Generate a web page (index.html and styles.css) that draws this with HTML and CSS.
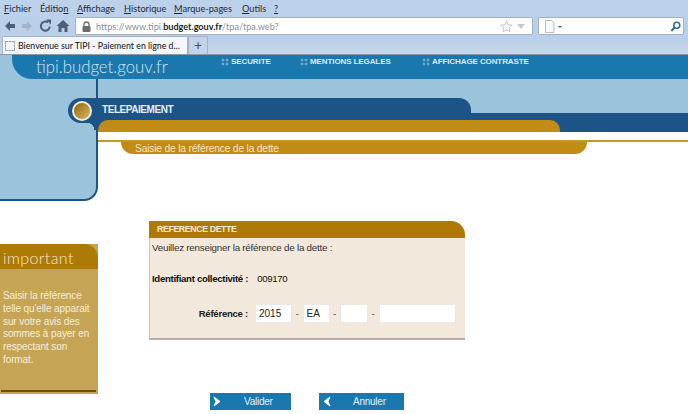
FILE: index.html
```html
<!DOCTYPE html>
<html>
  <head>
    <title>Bienvenue sur TIPI</title>
    <link rel="stylesheet" href="styles.css">
  </head>
  <body>
    <div class="chrome">
      <div class="menubar">
        <span class="menu m1"><u>F</u>ichier</span>
        <span class="menu m2">Éditio<u>n</u></span>
        <span class="menu m3"><u>A</u>ffichage</span>
        <span class="menu m4"><u>H</u>istorique</span>
        <span class="menu m5"><u>M</u>arque-pages</span>
        <span class="menu m6"><u>O</u>utils</span>
        <span class="menu"><u>?</u></span>
      </div>
      <div class="toolbar">
        <svg class="tool" width="72" height="16" viewBox="0 0 72 16">
          <path d="M2 8l5-5v3h5v4h-5v3z" fill="#4d5f73"/>
          <path d="M29 8l-5-5v3h-5v4h5v3z" fill="#a3b2c4"/>
          <path d="M45 4.500a4.500 4.500 0 1 0 1.800 4" fill="none" stroke="#4d5f73" stroke-width="2"/>
          <path d="M43 1.500l5 0v5z" fill="#4d5f73"/>
          <path d="M60 2l6.500 6h-2v6h-3v-4h-3v4h-3v-6h-2z" fill="#4d5f73"/>
        </svg>
        <div class="urlbar">
          <svg class="lock" width="9" height="11" viewBox="0 0 9 11">
            <path d="M2 5V3.500a2.500 2.500 0 0 1 5 0V5" fill="none" stroke="#6d6d6d" stroke-width="1.300"/>
            <rect x="0.500" y="5" width="8" height="6" rx="1" fill="#6d6d6d"/>
          </svg>
          <span class="url">https://www.tipi.<b>budget.gouv.fr</b>/tpa/tpa.web?</span>
          <svg class="star" width="26" height="13" viewBox="0 0 26 13">
            <path d="M6.500 1l1.700 3.700 4 .5-3 2.700.8 4-3.500-2-3.500 2 .8-4-3-2.700 4-.5z" fill="#f4f6f9" stroke="#c3c9d1"/>
            <path d="M17 4h8l-4 5z" fill="#c3c9d1"/>
          </svg>
        </div>
        <div class="searchbar">
          <svg width="20" height="13" viewBox="0 0 20 13">
            <path d="M1.500 .5h6l2.500 2.500v9.500h-8.500z" fill="#f7f8fa" stroke="#b6bcc4"/>
            <path d="M14 6h4l-2 2z" fill="#555"/>
          </svg>
          <svg width="11" height="11" viewBox="0 0 11 11">
            <circle cx="6.800" cy="4.200" r="3" fill="none" stroke="#2f6b9c" stroke-width="1.500"/>
            <path d="M4.800 6.200l-3.500 3.800" stroke="#2f6b9c" stroke-width="2"/>
          </svg>
        </div>
      </div>
      <div class="tabbar">
        <div class="tab">
          <span class="favicon"></span>
          <span>Bienvenue sur TIPI - Paiement en ligne d...</span>
        </div>
        <div class="newtab">+</div>
      </div>
    </div>

    <div class="banner">
      <div class="banner-inner">
        <div class="site-name">tipi.budget.gouv.fr</div>
        <a class="nav-link nav-1"><i class="dots"></i>SECURITE</a>
        <a class="nav-link nav-2"><i class="dots"></i>MENTIONS LEGALES</a>
        <a class="nav-link"><i class="dots"></i>AFFICHAGE CONTRASTE</a>
      </div>
    </div>

    <div class="hero">
      <div class="side">
        <div class="cap"><span class="bullet"></span></div>
        <div class="flare"></div>
      </div>
      <div class="hero-main">
        <div class="band">
          <div class="band-tab">TELEPAIEMENT</div>
          <div class="gold-tab"></div>
        </div>
        <div class="gold-line"></div>
        <div class="step">Saisie de la référence de la dette</div>
      </div>
    </div>

    <div class="lower">
      <div class="important">
        <div class="important-title">important</div>
        <p>Saisir la référence telle qu'elle apparait sur votre avis des sommes à payer en respectant son format.</p>
        <div class="important-rule"></div>
      </div>
      <div class="center">
        <div class="card">
          <div class="card-title">REFERENCE DETTE</div>
          <div class="card-body">
            <div class="intro">Veuillez renseigner la référence de la dette :</div>
            <div class="ident"><b>Identifiant collectivité :</b><span>009170</span></div>
            <div class="ref-row">
              <b class="ref-label">Référence :</b>
              <input class="field f-year" value="2015">
              <span>-</span>
              <input class="field f-code" value="EA">
              <span>-</span>
              <input class="field f-short" value="">
              <span>-</span>
              <input class="field f-long" value="">
            </div>
          </div>
        </div>
        <div class="actions">
          <a class="btn btn-ok">
            <svg width="9" height="11" viewBox="0 0 9 11"><path d="M1 1l6 4.500-6 4.500 2-4.500z" fill="#fff" stroke="#fff"/></svg>
            <span>Valider</span>
          </a>
          <a class="btn btn-cancel">
            <svg width="9" height="11" viewBox="0 0 9 11"><path d="M8 1l-6 4.500 6 4.500-2-4.500z" fill="#fff" stroke="#fff"/></svg>
            <span>Annuler</span>
          </a>
        </div>
      </div>
    </div>
  </body>
</html>
```

FILE: styles.css
```css
html, body {
  margin: 0;
  height: 414px;
  overflow: hidden;
}

body {
  width: 688px;
  background-color: white;
  font-family: "Liberation Sans", Arial, sans-serif;
  font-size: 10px;
  color: #222;
}

/* browser */
.chrome {
  height: 55px;
  background: linear-gradient(#bcd1ea, #b9cfe9 70%, #c8d6e8);
  border-bottom: 1px solid #8d9aa8;
  box-sizing: border-box;
  font-family: Lato, sans-serif;
}

.menubar {
  display: flex;
  height: 17px;
  padding-left: 4px;
  font-size: 9.200px;
  line-height: 17px;
  color: #1f2a38;
  white-space: nowrap;
}

.menu { flex: none; }
.m1 { width: 36px; }
.m2 { width: 37px; }
.m3 { width: 47px; }
.m4 { width: 50px; }
.m5 { width: 68px; }
.m6 { width: 32px; }

.toolbar {
  display: flex;
  align-items: center;
  height: 18px;
  padding-left: 3px;
}

.tool { flex: none; }

.urlbar {
  display: flex;
  align-items: center;
  width: 458px;
  height: 18px;
  box-sizing: border-box;
  margin-right: 5px;
  padding: 0 6px 0 5px;
  background-color: white;
  border: 1px solid #a3b1c2;
  border-radius: 2px;
}

.lock { margin-left: 1px; margin-right: 5px; }

.url {
  flex: 1;
  font-size: 9.100px;
  color: #8b8f95;
}

.url b {
  font-weight: 700;
  color: #1d1d1d;
}

.searchbar {
  display: flex;
  align-items: center;
  justify-content: space-between;
  width: 146px;
  height: 18px;
  box-sizing: border-box;
  padding: 0 2px 0 5px;
  background-color: white;
  border: 1px solid #a3b1c2;
  border-radius: 2px;
}

.tabbar {
  display: flex;
  align-items: flex-end;
  height: 19px;
  padding-left: 2px;
}

.tab {
  display: flex;
  align-items: center;
  width: 186px;
  height: 18px;
  background-color: #f3f6fb;
  border: 1px solid #a5b2c2;
  border-bottom: none;
  box-sizing: border-box;
  border-radius: 2px 2px 0 0;
  font-size: 8.800px;
  white-space: nowrap;
  overflow: hidden;
  color: #111;
}

.favicon {
  flex: none;
  width: 8px;
  height: 8px;
  margin: 0 3px 0 2px;
  border: 1px dashed #9aa2ac;
}

.newtab {
  width: 20px;
  height: 18px;
  box-sizing: border-box;
  background-color: #c4d4e8;
  border: 1px solid #a5b2c2;
  border-bottom: none;
  font-size: 14px;
  line-height: 15px;
  text-align: center;
  color: #44505e;
}

/* header of the site */
.banner {
  height: 24px;
  padding-left: 12px;
  background-color: #9bc3dc;
}

.banner-inner {
  display: flex;
  align-items: flex-start;
  height: 24px;
  background-color: #1a78ae;
  border-bottom-left-radius: 20px;
}

.site-name {
  width: 209px;
  padding-left: 24px;
  box-sizing: border-box;
  font-family: Lato, sans-serif;
  font-weight: 300;
  font-size: 16.800px;
  line-height: 23px;
  color: #d3e6f1;
  white-space: nowrap;
}

.nav-link {
  display: flex;
  align-items: center;
  padding-top: 2px;
  font-size: 8px;
  font-weight: bold;
  letter-spacing: -.1px;
  line-height: 10px;
  color: #dcebf4;
  white-space: nowrap;
}

.nav-1 { width: 79px; }
.nav-2 { width: 122px; }

.dots {
  width: 8px;
  height: 8px;
  margin-right: 2px;
  background-image: radial-gradient(circle, #6fa8cb 1.300px, transparent 1.700px);
  background-size: 4px 4px;
}

.hero {
  display: grid;
  grid-template-columns: 98px 1fr;
  height: 122px;
}

.side {
  box-sizing: border-box;
  padding-top: 19px;
  background-color: #9bc3dc;
  border-right: 2px solid #1c5488;
  border-bottom: 2px solid #1c5488;
  border-bottom-right-radius: 14px;
}

.cap {
  display: flex;
  align-items: center;
  width: 30px;
  height: 25px;
  margin-left: 68px;
  background-color: #1c5488;
  border-radius: 13px 0 0 13px;
}

.flare {
  width: 9px;
  height: 7px;
  margin-left: 87px;
  background-image: radial-gradient(circle at 0 100%, transparent 7px, #1c5488 7.500px);
}

.bullet {
  width: 16px;
  height: 16px;
  margin-left: 4px;
  background: linear-gradient(135deg, #8f6510, #d9b765);
  border: 2px solid #f1ead9;
  border-radius: 50%;
}

.hero-main {
  padding-top: 19px;
  background: linear-gradient(#9bc3dc 53px, white 53px);
}

.band {
  height: 34px;
  background: linear-gradient(#9bc3dc 15px, #1c5488 15px);
}

.band-tab {
  width: 373px;
  height: 22px;
  box-sizing: border-box;
  padding-left: 4px;
  background-color: #1c5488;
  border-top-right-radius: 12px;
  font-size: 10px;
  font-weight: bold;
  letter-spacing: -.45px;
  line-height: 23px;
  color: #e3eef5;
}

.gold-tab {
  width: 462px;
  height: 12px;
  background-color: #c18c15;
  border-radius: 10px 10px 0 0;
}

.gold-line {
  height: 2px;
  margin-top: 8px;
  background-color: #c8981f;
}

.step {
  width: 466px;
  height: 12px;
  box-sizing: border-box;
  margin-left: 23px;
  padding-left: 14px;
  background-color: #c18c15;
  border-radius: 0 0 12px 12px;
  font-size: 10.300px;
  letter-spacing: -.2px;
  line-height: 13px;
  color: #f6e6bf;
}

/* content */
.lower {
  display: grid;
  grid-template-columns: 98px 1fr;
}

.important {
  margin-top: 43px;
  height: 150px;
  background-color: #c5a455;
}

.important-title {
  height: 25px;
  padding-left: 3px;
  background-color: #ad7a06;
  border-top-right-radius: 14px;
  font-family: Lato, sans-serif;
  font-weight: 300;
  font-size: 16px;
  line-height: 27px;
  letter-spacing: .4px;
  color: #f4e8cf;
}

.important p {
  height: 93px;
  margin: 21px 0 0;
  padding-left: 3px;
  font-size: 10px;
  letter-spacing: -.1px;
  line-height: 12.800px;
  color: #f6eedd;
}

.important-rule {
  height: 2px;
  margin: 7px 2px 0 1px;
  background-color: #6f4e08;
}

.center {
  padding: 20px 0 0 51px;
}

.card {
  width: 316px;
}

.card-title {
  height: 17px;
  padding-left: 8px;
  background-color: #ad7a06;
  border-top-right-radius: 14px;
  font-size: 8.800px;
  font-weight: bold;
  letter-spacing: -.4px;
  line-height: 17px;
  color: #f5ead8;
}

.card-body {
  height: 102px;
  box-sizing: border-box;
  padding: 4px 0 0 2px;
  background-color: #f2e8dc;
  border-left: 1px solid #c9c4bf;
  border-bottom: 2px solid #b3aeab;
  font-size: 9.800px;
}

.intro {
  height: 12px;
  letter-spacing: -.24px;
  line-height: 12px;
  color: #333;
}

.ident {
  display: flex;
  gap: 9px;
  margin-top: 19px;
  font-size: 9.600px;
  letter-spacing: -.3px;
  line-height: 12px;
  color: #111;
}

.ref-row {
  display: flex;
  align-items: center;
  margin-top: 20px;
  color: #444;
}

.ref-row span {
  width: 12.500px;
  text-align: center;
}

.ref-label {
  width: 96px;
  margin-right: 8px;
  text-align: right;
  font-size: 9.600px;
  letter-spacing: -.27px;
  color: #222;
}

.field {
  height: 17px;
  box-sizing: border-box;
  padding: 1px 3px;
  background-color: white;
  border: none;
  outline: 1px solid #ece8e2;
  font-family: "Liberation Sans", Arial, sans-serif;
  font-size: 10px;
  color: #222;
}

.f-year { width: 35px; }
.f-code { width: 25px; }
.f-short { width: 26px; }
.f-long { width: 75px; }

.actions {
  display: flex;
  margin-top: 53px;
  margin-left: 61px;
}

.btn {
  display: flex;
  align-items: center;
  height: 17px;
  padding-left: 3px;
  box-sizing: border-box;
  background-color: #1a78ae;
  font-size: 10px;
  letter-spacing: -.25px;
  color: #e6f0f7;
}

.btn-ok { width: 81px; margin-right: 28px; }
.btn-cancel { width: 85px; }
.btn span { margin-left: 22px; }
```
